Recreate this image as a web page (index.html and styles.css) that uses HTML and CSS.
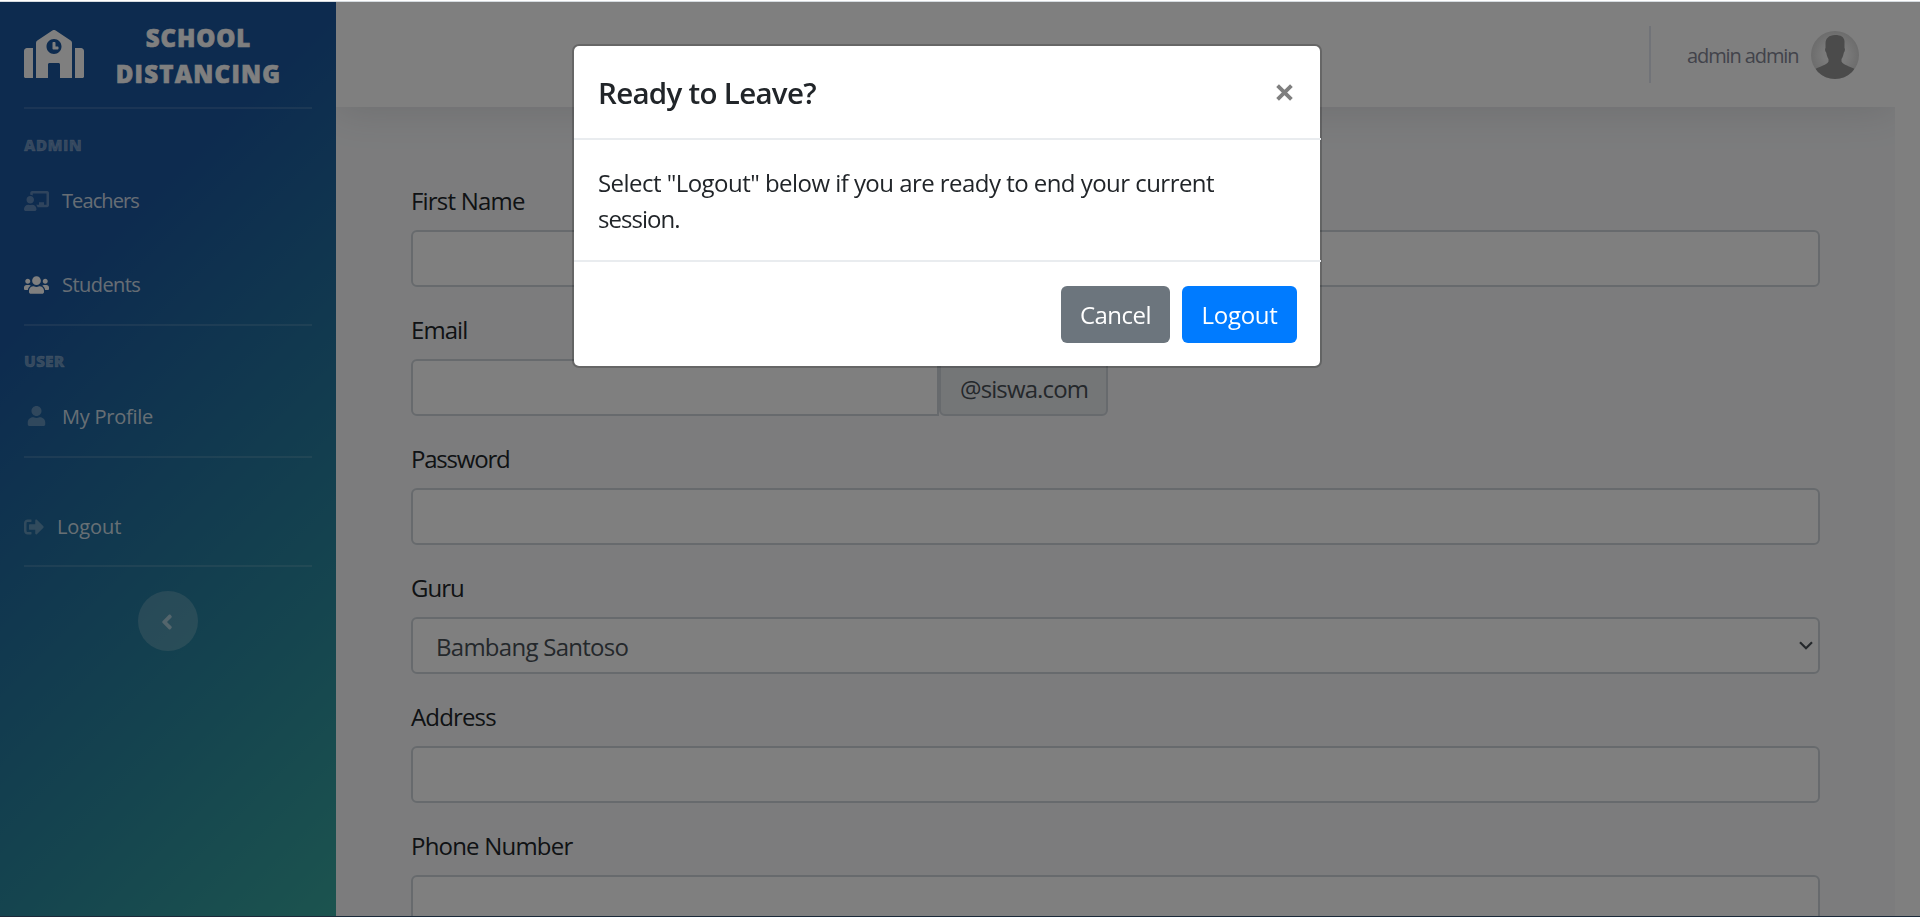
FILE: index.html
```html
<!DOCTYPE html>
<html lang="en">
<head>
<meta charset="utf-8">
<title>School Distancing</title>
<link rel="stylesheet" href="styles.css">
</head>
<body>
<div class="page">
  <nav class="sidebar">
    <a class="brand">
      <svg class="brand-icon" viewBox="0 0 640 512"><path d="M0 224v272c0 8.84 7.16 16 16 16h80V192H32c-17.67 0-32 14.33-32 32zm360-48h-24v-40c0-4.42-3.58-8-8-8h-16c-4.42 0-8 3.58-8 8v64c0 4.42 3.58 8 8 8h48c4.42 0 8-3.58 8-8v-16c0-4.42-3.58-8-8-8zm137.75-63.96l-160-106.67a32.02 32.02 0 0 0-35.5 0l-160 106.67A32.002 32.002 0 0 0 128 138.66V512h128V368c0-8.84 7.16-16 16-16h96c8.84 0 16 7.16 16 16v144h128V138.67c0-10.7-5.35-20.7-14.25-26.63zM320 256c-44.18 0-80-35.82-80-80s35.82-80 80-80 80 35.82 80 80-35.82 80-80 80zm288-64h-64v320h80c8.84 0 16-7.16 16-16V224c0-17.67-14.33-32-32-32z"/></svg>
      <span class="brand-text"><span class="brand-a">SCHOOL</span><span class="brand-b">DISTANCING</span></span>
    </a>
    <hr class="rule">
    <div class="group group-admin">ADMIN</div>
    <a class="item teachers">
      <svg class="icon wide" viewBox="0 0 640 512"><path d="M208 352c-2.39 0-4.78.35-7.06 1.09C187.98 357.3 174.35 360 160 360c-14.35 0-27.98-2.7-40.95-6.91-2.28-.74-4.66-1.09-7.05-1.09C49.94 352-.33 402.48 0 464.62.14 490.88 21.73 512 48 512h224c26.27 0 47.86-21.12 48-47.38.33-62.14-49.94-112.62-112-112.62zm-48-32c53.02 0 96-42.98 96-96s-42.98-96-96-96-96 42.98-96 96 42.98 96 96 96zM592 0H208c-26.47 0-48 22.25-48 49.59V96c23.42 0 45.1 6.78 64 17.8V64h352v288h-64v-64H384v64h-76.24c19.1 16.69 33.12 38.73 39.69 64H592c26.47 0 48-22.25 48-49.59V49.59C640 22.25 618.47 0 592 0z"/></svg>
      <span class="t-teachers">Teachers</span>
    </a>
    <a class="item students">
      <svg class="icon wide active" viewBox="0 0 640 512"><path d="M96 224c35.3 0 64-28.7 64-64s-28.7-64-64-64-64 28.7-64 64 28.7 64 64 64zm448 0c35.3 0 64-28.7 64-64s-28.7-64-64-64-64 28.7-64 64 28.7 64 64 64zm32 32h-64c-17.6 0-33.5 7.1-45.1 18.6 40.3 22.1 68.9 62 75.1 109.4h66c17.7 0 32-14.3 32-32v-32c0-35.3-28.7-64-64-64zm-256 0c61.9 0 112-50.1 112-112S381.9 32 320 32 208 82.1 208 144s50.1 112 112 112zm76.8 32h-8.3c-20.8 10-43.9 16-68.5 16s-47.6-6-68.5-16h-8.3C179.6 288 128 339.6 128 403.2V432c0 26.5 21.5 48 48 48h288c26.5 0 48-21.5 48-48v-28.8c0-63.6-51.6-115.2-115.2-115.2zm-223.7-13.4C161.5 263.1 145.6 256 128 256H64c-35.3 0-64 28.7-64 64v32c0 17.7 14.3 32 32 32h65.9c6.3-47.4 34.9-87.3 75.2-109.4z"/></svg>
      <span class="t-students">Students</span>
    </a>
    <hr class="rule">
    <div class="group group-user">USER</div>
    <a class="item profile">
      <svg class="icon wide" viewBox="-96 0 640 512"><path d="M224 256c70.7 0 128-57.3 128-128S294.7 0 224 0 96 57.3 96 128s57.3 128 128 128zm89.6 32h-16.7c-22.2 10.2-46.9 16-72.9 16s-50.6-5.8-72.9-16h-16.7C60.2 288 0 348.2 0 422.4V464c0 26.5 21.5 48 48 48h352c26.5 0 48-21.5 48-48v-41.6c0-74.2-60.2-134.4-134.4-134.4z"/></svg>
      <span class="t-profile">My Profile</span>
    </a>
    <hr class="rule">
    <a class="item logout">
      <svg class="icon narrow" viewBox="0 0 512 512"><path d="M497 273L329 441c-15 15-41 4.5-41-17v-96H152c-13.3 0-24-10.7-24-24v-96c0-13.3 10.7-24 24-24h136V88c0-21.4 25.9-32 41-17l168 168c9.3 9.4 9.3 24.6 0 34zM192 436v-40c0-6.6-5.4-12-12-12H96c-17.7 0-32-14.3-32-32V160c0-17.7 14.3-32 32-32h84c6.6 0 12-5.4 12-12V76c0-6.6-5.4-12-12-12H96c-53 0-96 43-96 96v192c0 53 43 96 96 96h84c6.6 0 12-5.4 12-12z"/></svg>
      <span class="t-logout">Logout</span>
    </a>
    <hr class="rule">
    <button class="toggle"><svg class="toggle-icon" viewBox="0 0 256 512"><path d="M31.7 239l136-136c9.4-9.4 24.6-9.4 33.9 0l22.6 22.6c9.4 9.4 9.4 24.6 0 33.9L127.9 256l96.4 96.4c9.4 9.4 9.4 24.6 0 33.9L201.7 409c-9.4 9.4-24.6 9.4-33.9 0l-136-136c-9.5-9.4-9.5-24.6-.1-34z"/></svg></button>
  </nav>
  <div class="main">
    <header class="topbar">
      <div class="divider"></div>
      <span class="user-name">admin admin</span>
      <svg class="avatar" viewBox="0 0 48 48">
        <defs>
          <radialGradient id="halo" cx=".5" cy=".5" r=".5"><stop offset="0" stop-color="#fff"/><stop offset=".5" stop-color="#f4f4f4"/><stop offset="1" stop-color="#dadada"/></radialGradient>
          <clipPath id="round"><circle cx="24" cy="24" r="24"/></clipPath>
        </defs>
        <g clip-path="url(#round)">
          <rect width="48" height="48" fill="url(#halo)"/>
          <path fill="#969696" d="M24 4c-6 0-9.500 3.500-9.500 8.500v4.500c-.8.700-.5 3.500.8 4.800.5 3.200 1.400 5 2.200 6.300v2.500c-1.500 3.500-9 5-12.800 7.200L3 48h42l-1.700-10.200C39.500 35.600 32 34.100 30.500 30.600v-2.600c1-1.400 1.800-3.200 2.300-6.300 1.300-1.300 1.500-4 .7-4.700v-7C33 6 30 4 24 4z"/>
        </g>
      </svg>
    </header>
    <section class="content">
      <form class="form">
        <div class="field"><label class="l-first">First Name</label><div class="control"></div></div>
        <div class="field"><label class="l-email">Email</label><div class="email"><div class="control email-input"></div><span class="suffix"><span class="t-suffix">@siswa.com</span></span></div></div>
        <div class="field"><label class="l-pass">Password</label><div class="control"></div></div>
        <div class="field"><label class="l-guru">Guru</label><div class="control select"><span class="t-select">Bambang Santoso</span><svg class="caret" viewBox="0 0 14 9"><path d="M1 1.300l6 6 6-6"/></svg></div></div>
        <div class="field"><label class="l-address">Address</label><div class="control"></div></div>
        <div class="field"><label class="l-phone">Phone Number</label><div class="control"></div></div>
      </form>
    </section>
  </div>
</div>
<div class="backdrop"></div>
<div class="modal">
  <div class="modal-header"><h5 class="modal-title">Ready to Leave?</h5><svg class="close" viewBox="0 0 16 16"><path d="M1.500 1.500l13 13M14.500 1.500l-13 13"/></svg></div>
  <div class="modal-body"><span class="t-body">Select "Logout" below if you are ready to end your current</span><br><span class="t-session">session.</span></div>
  <div class="modal-footer"><button class="btn cancel"><span class="t-cancel">Cancel</span></button><button class="btn primary"><span class="t-out">Logout</span></button></div>
</div>
<div class="edge-top"></div>
<div class="edge-bottom"></div>
</body>
</html>
```
FILE: styles.css
```css
* { box-sizing: border-box; }
body {
  margin: 0;
  height: 917px;
  overflow: hidden;
  padding-top: 2px;
  background: #fff;
  color: #212529;
  font: 24px/36px "Open Sans", "Noto Sans", sans-serif;
}
button { border: 0; font: inherit; padding: 0; }
.page { display: flex; height: 915px; padding-right: 25px; }

.sidebar {
  display: flex;
  flex-direction: column;
  width: 336px;
  flex: none;
  padding: 0 24px;
  background: linear-gradient(135deg, #1a569e 0%, #1a569e 27%, #2a899e 73%, #38a89e 100%);
  color: #fff;
}
.brand { display: flex; align-items: center; height: 105px; }
.brand-icon { width: 60px; height: 48px; fill: #fff; margin-bottom: 2px; }
.brand-text {
  display: flex;
  flex-direction: column;
  align-items: center;
  margin-left: 32px;
  padding-top: 2px;
  width: 165px;
  font-weight: 800;
  font-size: 24px;
  -webkit-text-stroke: .6px #fff;
}
.brand-a { letter-spacing: .9px; }
.brand-b { letter-spacing: 1.25px; }
.rule { width: 288px; height: 2px; margin: 0; border: 0; background: rgba(255, 255, 255, .13); flex: none; }
.group {
  display: flex;
  align-items: center;
  height: 73px;
  padding-bottom: 2px;
  font-weight: 800;
  font-size: 15.6px;
  letter-spacing: .35px;
  color: rgba(255, 255, 255, .35);
  -webkit-text-stroke: .4px rgba(255, 255, 255, .3);
}
.group-user { height: 71px; letter-spacing: .1px; }
.item { display: flex; align-items: center; height: 38px; font-size: 20px; line-height: 30px; color: rgba(255, 255, 255, .8); }
.icon { flex: none; fill: rgba(255, 255, 255, .3); }
.icon.wide { width: 25px; height: 20px; margin-right: 13px; }
.icon.narrow { width: 20px; height: 20px; margin-right: 13px; }
.icon.active { fill: #fff; }
.students { margin: 46px 0 20px; }
.profile { margin-bottom: 21px; }
.logout { margin: 50px 0 19px; }
.t-teachers { letter-spacing: -.9px; }
.t-students { letter-spacing: -.55px; }
.t-profile { letter-spacing: -.25px; padding-top: 2px; }
.t-logout { letter-spacing: -.1px; }
.toggle {
  display: flex;
  align-items: center;
  justify-content: center;
  align-self: center;
  width: 60px;
  height: 60px;
  margin-top: 24px;
  border-radius: 50%;
  background: rgba(255, 255, 255, .2);
}
.toggle-icon { width: 12px; height: 24px; margin: 2px 2px 0 0; fill: rgba(255, 255, 255, .5); }

.main { flex: 1; display: flex; flex-direction: column; overflow: hidden; background: #f8f9fb; }
.topbar {
  display: flex;
  align-items: center;
  justify-content: flex-end;
  height: 105px;
  flex: none;
  padding-right: 36px;
  background: #fff;
  box-shadow: 0 3px 42px 0 rgba(58, 59, 69, .15);
}
.divider { width: 2px; height: 57px; margin-right: 36px; background: #e3e6f0; }
.user-name { width: 112px; margin-right: 12px; padding-top: 2px; font-size: 20px; letter-spacing: -1.1px; color: #858796; white-space: nowrap; }
.avatar { width: 48px; height: 48px; }
.form { display: flex; flex-direction: column; gap: 24px; padding: 75px 75px 0; }
.field { height: 105px; flex: none; }
.field label { display: block; height: 48px; line-height: 38px; white-space: nowrap; }
.l-first { letter-spacing: -.8px; }
.l-email { letter-spacing: -.95px; }
.l-pass { letter-spacing: -1.2px; }
.l-guru { letter-spacing: -1px; }
.l-address { letter-spacing: -.85px; }
.l-phone { letter-spacing: -.8px; }
.control { height: 57px; border: 2px solid #ced4da; border-radius: 6px; background: #fff; }
.email { display: flex; }
.email-input { width: 528px; border-radius: 6px 0 0 6px; }
.suffix {
  display: flex;
  align-items: center;
  width: 169px;
  height: 57px;
  padding-left: 19px;
  border: 2px solid #ced4da;
  border-radius: 6px;
  background: #e9ecef;
  color: #495057;
}
.t-suffix { letter-spacing: -.88px; padding-top: 2px; }
.select { display: flex; align-items: center; justify-content: space-between; padding: 0 5px 0 23px; color: #495057; }
.t-select { letter-spacing: -.73px; padding-top: 2px; }
.caret { width: 14px; height: 9px; margin-top: -1px; fill: none; stroke: #495057; stroke-width: 2.2; }

.backdrop { position: fixed; inset: 2px 0 0; background: rgba(0, 0, 0, .5); }
.modal {
  position: fixed;
  left: 572px;
  top: 44px;
  width: 750px;
  height: 324px;
  border: 2px solid rgba(0, 0, 0, .2);
  border-radius: 7px;
  background: #fff;
  background-clip: padding-box;
}
.modal-header { display: flex; align-items: center; justify-content: space-between; height: 94px; padding: 0 28px 0 24px; border-bottom: 2px solid #e9ecef; margin-right: -1px; }
.modal-title { margin: 0; font-size: 29.5px; font-weight: 600; line-height: 45px; letter-spacing: -.7px; }
.close { width: 17px; height: 17px; fill: none; stroke: #7f7f7f; stroke-width: 3.6; }
.modal-body { height: 120px; padding: 25px 0 0 24px; white-space: nowrap; }
.t-body { letter-spacing: -.54px; }
.t-session { letter-spacing: -.95px; }
.modal-footer { display: flex; justify-content: flex-end; gap: 12px; padding: 24px 24px 0 0; border-top: 2px solid #e9ecef; margin-right: -1px; }
.btn { display: flex; align-items: center; justify-content: center; height: 57px; padding-top: 1px; border-radius: 6px; color: #fff; }
.cancel { width: 109px; background: #6c757d; }
.primary { width: 115px; background: #007bff; }
.t-cancel { letter-spacing: -.5px; }
.t-out { letter-spacing: -.3px; }
.edge-top { position: fixed; inset: 1px 0 auto; height: 1px; background: #d5dbe0; }
.edge-bottom { position: fixed; inset: auto 0 0; height: 1px; background: #1b2a3a; }
```
